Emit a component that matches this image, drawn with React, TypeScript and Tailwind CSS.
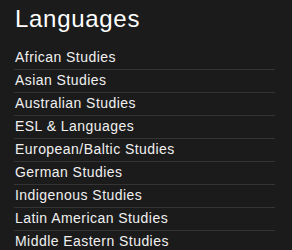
import React from 'react';

const items = [
  'African Studies',
  'Asian Studies',
  'Australian Studies',
  'ESL & Languages',
  'European/Baltic Studies',
  'German Studies',
  'Indigenous Studies',
  'Latin American Studies',
  'Middle Eastern Studies',
];

const App: React.FC = () => {
  return (
    <div className="w-[292px] h-[250px] overflow-hidden bg-[#1b1b1b] pl-[14px] pr-[17px] pt-[3px] font-['Liberation_Sans',Arial,sans-serif]">
      <h2 className="text-[24px] leading-[32px] tracking-[0.7px] text-white pl-px">Languages</h2>
      <ul className="mt-[12px]">
        {items.map(label => (
          <li key={label} className="h-[23px] border-b border-[#343434] text-[14px] leading-[21px] tracking-[0.45px] text-[#f0f0f0] pl-px">
            {label}
          </li>
        ))}
      </ul>
    </div>
  );
};

export default App;
